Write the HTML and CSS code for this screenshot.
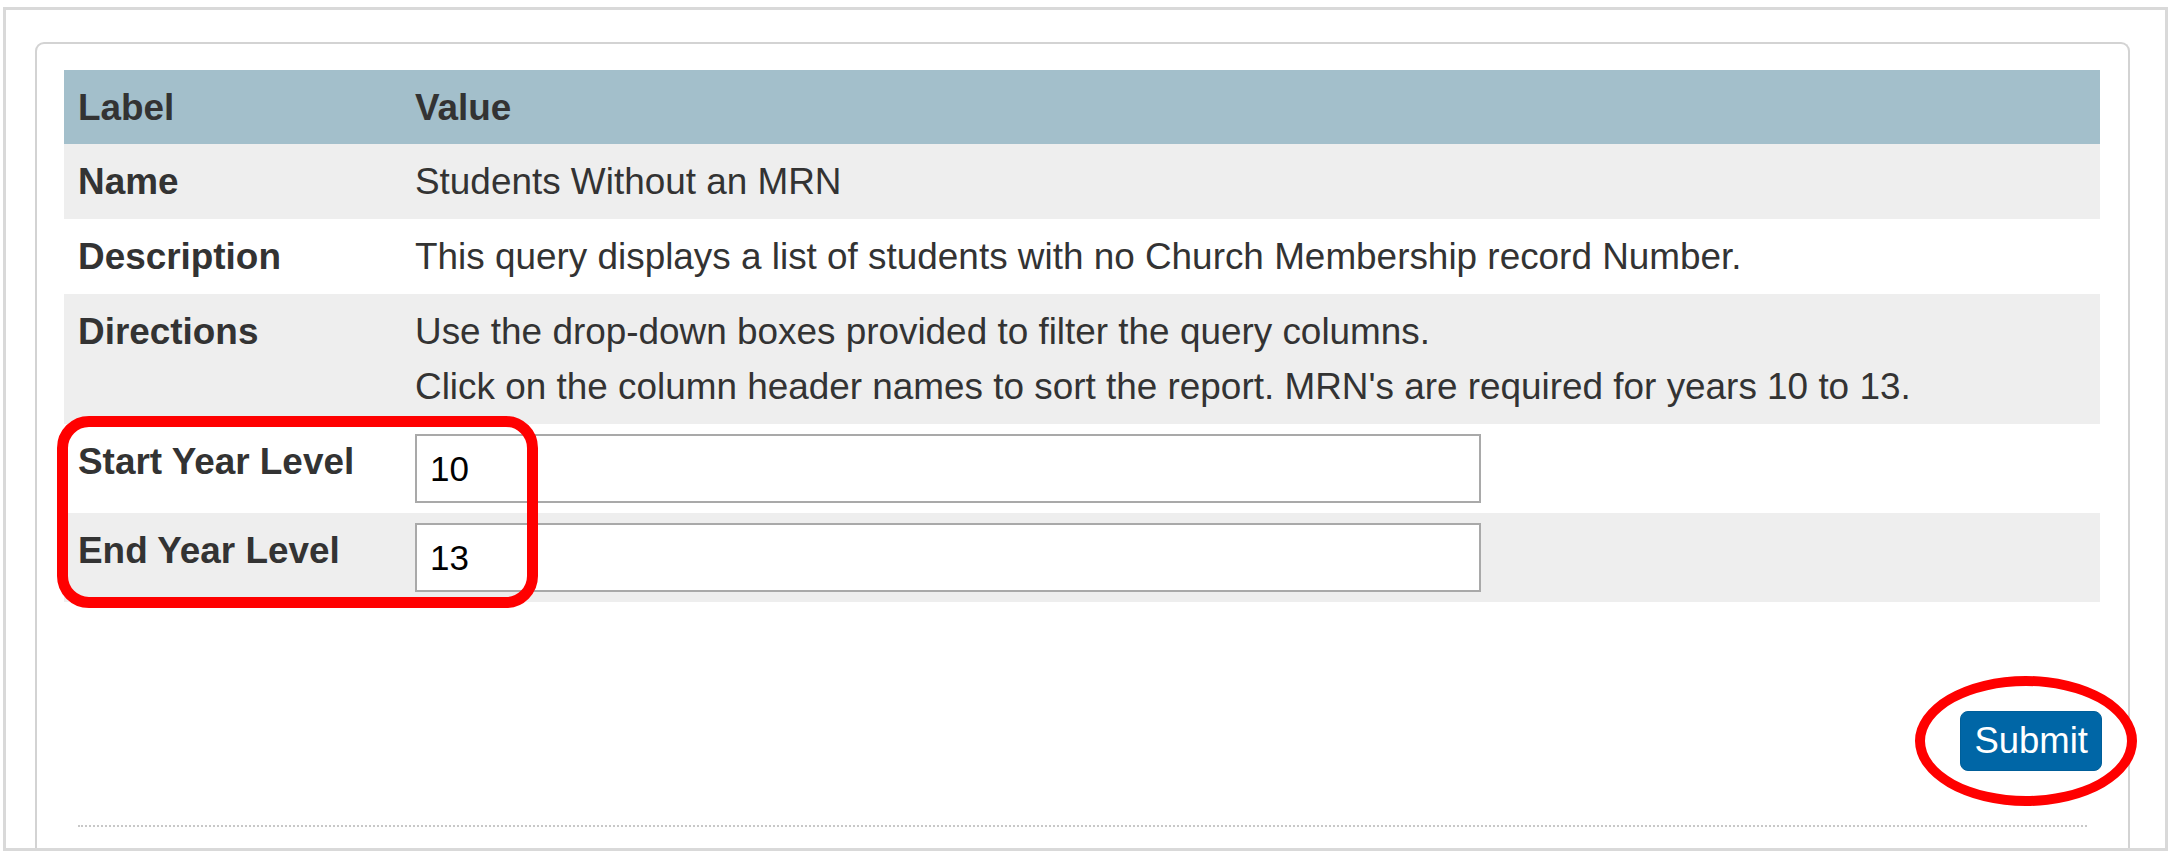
FILE: index.html
```html
<!DOCTYPE html>
<html>
<head>
<meta charset="utf-8">
<title>Query</title>
<link rel="stylesheet" href="styles.css">
</head>
<body>
<div class="frame">
  <div class="panel">
    <table class="info">
      <thead>
        <tr class="head"><th class="lbl">Label</th><th class="val">Value</th></tr>
      </thead>
      <tbody>
        <tr class="alt"><td class="lbl">Name</td><td class="val">Students Without an MRN</td></tr>
        <tr><td class="lbl">Description</td><td class="val">This query displays a list of students with no Church Membership record Number.</td></tr>
        <tr class="alt"><td class="lbl">Directions</td><td class="val">Use the drop-down boxes provided to filter the query columns.<br>Click on the column header names to sort the report. MRN's are required for years 10 to 13.</td></tr>
        <tr class="inrow"><td class="lbl">Start Year Level</td><td class="val"><input class="field" type="text" value="10"></td></tr>
        <tr class="inrow alt"><td class="lbl">End Year Level</td><td class="val"><input class="field" type="text" value="13"></td></tr>
      </tbody>
    </table>
    <div class="actions"><button class="submit" type="button">Submit</button></div>
    <div class="dots"></div>
  </div>
</div>
<div class="mark-rect"></div>
<div class="mark-ellipse"></div>
</body>
</html>
```

FILE: styles.css
```css
html, body {
  margin: 0;
  padding: 0;
  background: #ffffff;
}
body {
  font-family: "Liberation Sans", Arial, sans-serif;
  font-size: 36.9px;
  color: #333333;
  position: relative;
  width: 2172px;
  height: 856px;
  overflow: hidden;
}
.frame {
  box-sizing: border-box;
  margin: 7px 0 0 3px;
  width: 2165px;
  height: 844px;
  border: 3px solid #d9d9d9;
  overflow: hidden;
}
.panel {
  margin: 32px 35px 0 29px;
  border: 2px solid #d3d3d3;
  border-bottom: none;
  border-radius: 9px 9px 0 0;
  padding: 26px 28px 60px 27px;
  height: 900px;
}
.info {
  width: 100%;
  border-collapse: collapse;
  border-spacing: 0;
}
.info th, .info td {
  text-align: left;
  vertical-align: top;
  line-height: 55px;
  padding: 10px 0;
}
.info .head th {
  background: #a3bfcb;
  font-weight: bold;
  padding-top: 9.5px;
  padding-bottom: 9.5px;
}
.info .lbl {
  width: 337px;
  padding-left: 14px;
  font-weight: bold;
}
.info .val {
  font-weight: normal;
}
.info .head .val {
  font-weight: bold;
}
.info tr.alt td {
  background: #eeeeee;
}
.field {
  box-sizing: border-box;
  display: block;
  width: 1066px;
  height: 69px;
  margin: 0;
  border: 2px solid #a9a9a9;
  background: #ffffff;
  padding: 0 13px;
  font-family: "Liberation Sans", Arial, sans-serif;
  font-size: 35px;
  color: #000000;
  outline: none;
}
.actions {
  display: flex;
  justify-content: flex-end;
  margin: 109px -2px 0 0;
}
.submit {
  box-sizing: border-box;
  height: 60px;
  padding: 0 13px;
  border: 1px solid #005f9a;
  border-radius: 8px;
  background: #0066a6;
  color: #ffffff;
  font-family: "Liberation Sans", Arial, sans-serif;
  font-size: 36.5px;
  line-height: 58px;
}
.dots {
  margin: 54px 13px 0 14px;
  border-top: 2px dotted #c8c8c8;
}
.mark-rect {
  position: absolute;
  box-sizing: border-box;
  left: 57px;
  top: 416px;
  width: 481px;
  height: 192px;
  border: 11px solid #ff0000;
  border-radius: 32px;
}
.mark-ellipse {
  position: absolute;
  box-sizing: border-box;
  left: 1915px;
  top: 676px;
  width: 222px;
  height: 130px;
  border: 10px solid #ff0000;
  border-radius: 50%;
}
```
